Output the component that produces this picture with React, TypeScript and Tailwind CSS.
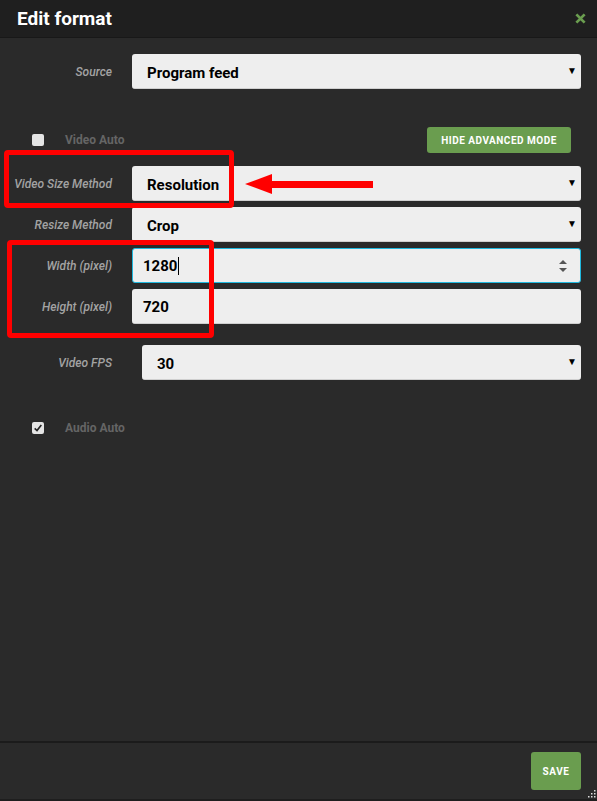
const font = { fontFamily: 'Roboto, "Noto Sans", sans-serif' }

function Label({ children }: { children: React.ReactNode }) {
  return (
    <div className="w-[112px] shrink-0 text-right text-[12px] italic font-medium text-[#a3a3a3] leading-none">
      {children}
    </div>
  )
}

function Caret() {
  return <span className="absolute right-[4px] top-1/2 -translate-y-1/2 text-[10px] leading-none text-black">▼</span>
}

function SelectBox({ value }: { value: string }) {
  return (
    <div className="relative flex-1 h-[35px] bg-[#eeeeee] rounded-[3px] border-b border-[#cfcfcf] flex items-center pl-[15px]">
      <span className="text-[15px] font-bold text-black translate-y-[2px]">{value}</span>
      <Caret />
    </div>
  )
}

function Check({ checked }: { checked?: boolean }) {
  return (
    <div className="w-[12px] h-[12px] rounded-[2px] bg-[#e4e4e4] flex items-center justify-center">
      {checked && (
        <svg viewBox="0 0 12 12" className="w-[10px] h-[10px]">
          <path d="M2 6.5 L4.8 9 L10 2.5" fill="none" stroke="#222" strokeWidth="2" />
        </svg>
      )}
    </div>
  )
}

export default function App() {
  return (
    <div style={font} className="relative w-[597px] h-[801px] bg-[#1e1e1e] overflow-hidden">
      <div className="h-[799px] flex flex-col bg-[#2a2a2a]">
        {/* Header */}
        <div className="h-[38px] shrink-0 bg-[#1f1f1f] border-b border-[#181818] flex items-center justify-between pl-[17px] pr-[11px]">
          <h1 className="text-[19px] font-bold text-white translate-y-[1px]">Edit format</h1>
          <svg viewBox="0 0 12 12" className="w-[11px] h-[11px]">
            <path d="M1.5 1.5 L10.5 10.5 M10.5 1.5 L1.5 10.5" stroke="#6a9d4f" strokeWidth="3" />
          </svg>
        </div>

        {/* Body */}
        <div className="flex-1 flex flex-col pr-[16px] pt-[16px]">
          <div className="flex items-center gap-[20px]">
            <Label>Source</Label>
            <SelectBox value="Program feed" />
          </div>

          <div className="flex items-center justify-between mt-[38px] pl-[32px] pr-[10px]">
            <div className="flex items-center gap-[21px]">
              <Check />
              <span className="text-[12px] font-bold text-[#656565]">Video Auto</span>
            </div>
            <button className="h-[26px] w-[144px] rounded-[3px] bg-[#6a9d4f] text-white text-[10px] font-bold tracking-[0.5px]">
              HIDE ADVANCED MODE
            </button>
          </div>

          <div className="flex flex-col gap-[6px] mt-[13px]">
            <div className="flex items-center gap-[20px]">
              <Label>Video Size Method</Label>
              <SelectBox value="Resolution" />
            </div>
            <div className="flex items-center gap-[20px]">
              <Label>Resize Method</Label>
              <SelectBox value="Crop" />
            </div>
            <div className="flex items-center gap-[20px]">
              <Label>Width (pixel)</Label>
              <div className="relative flex-1 h-[35px] bg-[#eeeeee] rounded-[3px] border border-[#1fb8de] flex items-center pl-[10px] pt-[1px]">
                <span className="text-[15px] font-bold text-black">1280</span>
                <span className="w-px h-[18px] bg-black ml-[1px]" />
                <div className="absolute right-[13px] top-1/2 -translate-y-1/2 flex flex-col items-center gap-[4px]">
                  <span className="w-0 h-0 border-l-[4px] border-r-[4px] border-b-[4px] border-l-transparent border-r-transparent border-b-[#555]" />
                  <span className="w-0 h-0 border-l-[4px] border-r-[4px] border-t-[4px] border-l-transparent border-r-transparent border-t-[#555]" />
                </div>
              </div>
            </div>
            <div className="flex items-center gap-[20px]">
              <Label>Height (pixel)</Label>
              <div className="flex-1 h-[35px] bg-[#eeeeee] rounded-[3px] border-b border-[#cfcfcf] flex items-center pl-[11px] pt-[2px]">
                <span className="text-[15px] font-bold text-black">720</span>
              </div>
            </div>
          </div>

          <div className="flex items-center gap-[30px] mt-[21px]">
            <Label>Video FPS</Label>
            <SelectBox value="30" />
          </div>

          <div className="flex items-center gap-[21px] mt-[39px] pl-[32px]">
            <Check checked />
            <span className="text-[12px] font-bold text-[#656565]">Audio Auto</span>
          </div>
        </div>

        {/* Footer */}
        <div className="h-[58px] shrink-0 border-t-2 border-[#1b1b1b] flex items-start justify-end pt-[9px] pr-[16px] relative">
          <button className="w-[50px] h-[38px] rounded-[3px] bg-[#6a9d4f] text-white text-[10px] font-bold tracking-[0.6px]">
            SAVE
          </button>
          <svg viewBox="0 0 8 8" className="absolute right-[1px] bottom-[1px] w-[8px] h-[8px]">
            <rect x="6" y="0" width="1.5" height="1.5" fill="#ddd" />
            <rect x="3" y="3" width="1.5" height="1.5" fill="#ddd" />
            <rect x="6" y="3" width="1.5" height="1.5" fill="#ddd" />
            <rect x="0" y="6" width="1.5" height="1.5" fill="#ddd" />
            <rect x="3" y="6" width="1.5" height="1.5" fill="#ddd" />
            <rect x="6" y="6" width="1.5" height="1.5" fill="#ddd" />
          </svg>
        </div>
      </div>

      {/* Red annotations */}
      <div className="absolute left-[4px] top-[150px] w-[230px] h-[58px] border-[5px] border-[#ff0000] rounded-[4px] pointer-events-none" />
      <div className="absolute left-[7px] top-[240px] w-[207px] h-[98px] border-[5px] border-[#ff0000] rounded-[4px] pointer-events-none" />
      <svg className="absolute left-[240px] top-[170px] pointer-events-none" width="140" height="30" viewBox="0 0 140 30">
        <polygon points="5,14 32,4 32,24" fill="#ff0000" />
        <rect x="31" y="11" width="102" height="7" fill="#ff0000" />
      </svg>
    </div>
  )
}
